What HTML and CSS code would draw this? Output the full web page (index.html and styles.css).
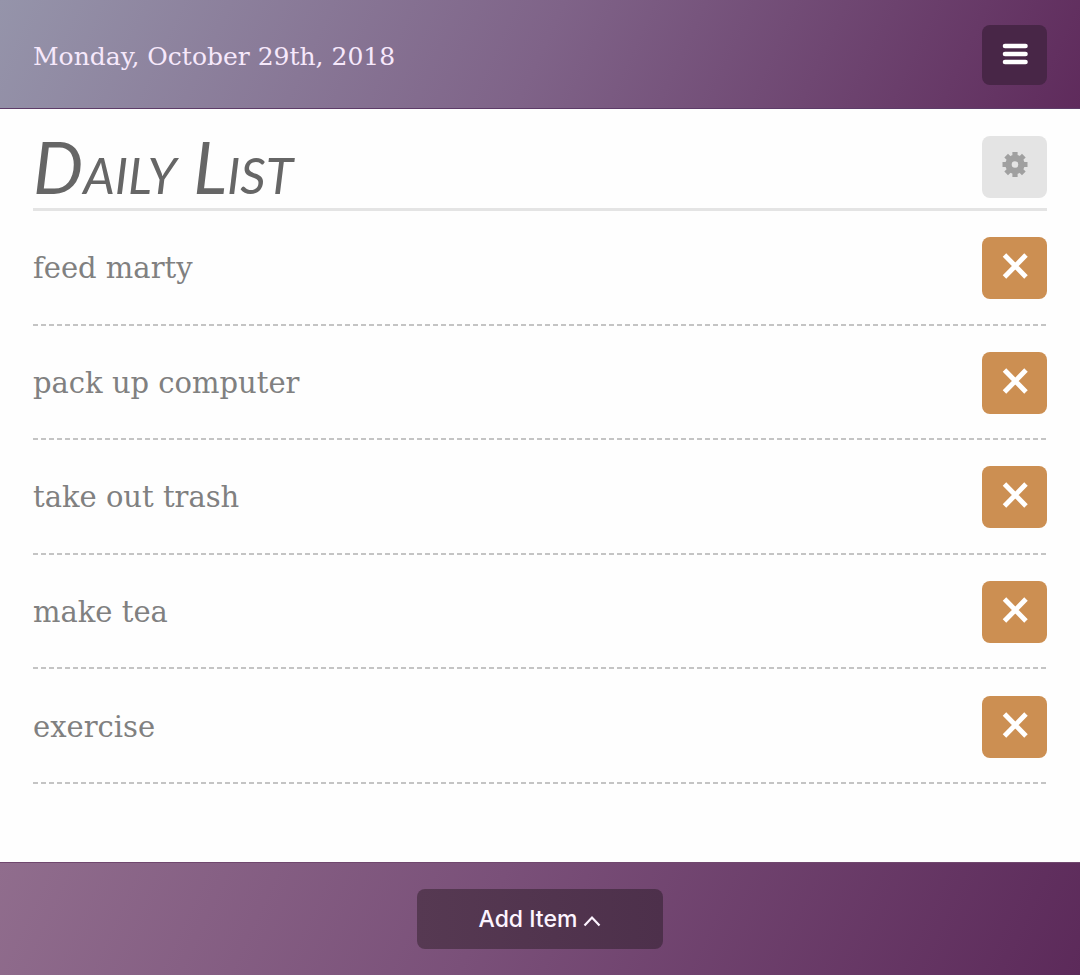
FILE: index.html
```html
<!DOCTYPE html>
<html lang="en">
<head>
<meta charset="utf-8">
<meta name="viewport" content="width=device-width, initial-scale=1">
<title>Daily List</title>
<link rel="stylesheet" href="styles.css">
</head>
<body>
<header class="topbar">
  <time class="date" datetime="2018-10-29">Monday, October 29th, 2018</time>
  <button class="btn btn-dark" type="button" aria-label="Menu">
    <svg class="icon" viewBox="0 0 26 26" aria-hidden="true"><path d="M3 5h20.500M3 13h20.500M3 21h20.500" stroke="currentColor" stroke-width="4.600" stroke-linecap="round"/></svg>
  </button>
</header>
<main class="content">
  <div class="heading">
    <h1 class="title">Daily List</h1>
    <button class="btn btn-light" type="button" aria-label="List settings">
      <svg class="icon" viewBox="0 0 26 26" aria-hidden="true">
        <g fill="currentColor">
          <path fill-rule="evenodd" d="M13 2.800a9.700 9.700 0 1 0 0 19.400a9.700 9.700 0 1 0 0-19.400zM13 9.200a3.300 3.300 0 1 1 0 6.600a3.300 3.300 0 1 1 0-6.600z"/>
          <path id="tooth" d="M10.400 0h5.200v5h-5.200zM10.400 20h5.200v5h-5.200zM.5 9.900h5v5.200h-5zM20.500 9.900h5v5.200h-5z"/>
          <use href="#tooth" transform="rotate(45 13 12.500)"/>
        </g>
      </svg>
    </button>
  </div>
  <ul class="list">
    <li class="item"><span>feed marty</span><button class="btn btn-remove" type="button" aria-label="Remove feed marty"><svg class="icon" viewBox="0 0 26 26" aria-hidden="true"><path d="M2.500 2l21.500 22M24 2L2.500 24" stroke="currentColor" stroke-width="4.900"/></svg></button></li>
    <li class="item"><span>pack up computer</span><button class="btn btn-remove" type="button" aria-label="Remove pack up computer"><svg class="icon" viewBox="0 0 26 26" aria-hidden="true"><path d="M2.500 2l21.500 22M24 2L2.500 24" stroke="currentColor" stroke-width="4.900"/></svg></button></li>
    <li class="item"><span>take out trash</span><button class="btn btn-remove" type="button" aria-label="Remove take out trash"><svg class="icon" viewBox="0 0 26 26" aria-hidden="true"><path d="M2.500 2l21.500 22M24 2L2.500 24" stroke="currentColor" stroke-width="4.900"/></svg></button></li>
    <li class="item"><span>make tea</span><button class="btn btn-remove" type="button" aria-label="Remove make tea"><svg class="icon" viewBox="0 0 26 26" aria-hidden="true"><path d="M2.500 2l21.500 22M24 2L2.500 24" stroke="currentColor" stroke-width="4.900"/></svg></button></li>
    <li class="item"><span>exercise</span><button class="btn btn-remove" type="button" aria-label="Remove exercise"><svg class="icon" viewBox="0 0 26 26" aria-hidden="true"><path d="M2.500 2l21.500 22M24 2L2.500 24" stroke="currentColor" stroke-width="4.900"/></svg></button></li>
  </ul>
</main>
<footer class="bottombar">
  <button class="add" type="button">Add Item
    <svg class="chevron" viewBox="0 0 18 12" aria-hidden="true"><path d="M1.500 10.500L9 2.500l7.500 8" fill="none" stroke="currentColor" stroke-width="2.200"/></svg>
  </button>
</footer>
</body>
</html>
```

FILE: styles.css
```css
* {
  box-sizing: border-box;
}

body {
  margin: 0;
  min-height: 100vh;
  display: flex;
  flex-direction: column;
  background: #fefefe;
  font-family: "DejaVu Serif", serif;
}

.topbar,
.bottombar {
  display: flex;
  align-items: center;
}

.topbar {
  justify-content: space-between;
  padding: 25px 33px 23px;
  background: linear-gradient(115deg, #9594aa, #7f6388 50%, #5f2b5c);
  border-bottom: 1px solid #5d3b68;
}

.date {
  padding-top: 4px;
  color: #f6e8fb;
  font-size: 25px;
  line-height: 32px;
}

.btn {
  display: flex;
  flex: none;
  justify-content: center;
  width: 65px;
  height: 62px;
  padding: 16px 0 0 1px;
  border: 0;
  border-radius: 8px;
  cursor: pointer;
}

.btn-dark {
  height: 60px;
  color: #fff;
  background: #482647;
}

.btn-light {
  color: #a0a0a0;
  background: #e4e4e4;
}

.btn-remove {
  color: #fff;
  background: #cc8f52;
}

.icon {
  width: 26px;
  height: 26px;
}

.content {
  flex: 1;
  display: flex;
  flex-direction: column;
  padding: 27px 33px 78px;
}

.heading {
  display: flex;
  align-items: center;
  justify-content: space-between;
  padding-bottom: 10px;
  border-bottom: 3px solid #e4e4e4;
}

.title {
  margin: 0;
  color: #666;
  font-family: Lato, sans-serif;
  font-size: 71px;
  font-style: italic;
  font-variant: small-caps;
  font-weight: 400;
  line-height: 62px;
}

.list {
  flex: 1;
  display: grid;
  grid-auto-rows: 1fr;
  margin: 0;
  padding: 0;
  list-style: none;
}

.item {
  display: flex;
  align-items: center;
  justify-content: space-between;
  color: #808080;
  font-size: 29px;
  line-height: 36px;
  background: repeating-linear-gradient(90deg, #c4c4c4 0 5px, transparent 5px 8px) bottom / 100% 2px no-repeat;
}

.bottombar {
  justify-content: center;
  padding: 26px 33px;
  background: linear-gradient(115deg, #906d8d, #7a5079 45%, #5c2a5a);
  border-top: 1px solid #70476e;
}

.add {
  width: 246px;
  height: 60px;
  padding: 0;
  border: 0;
  border-radius: 8px;
  color: #fdf4ff;
  background: linear-gradient(90deg, #563952, #4d304b);
  font-family: Inter, sans-serif;
  font-size: 23px;
  font-weight: 500;
  cursor: pointer;
}

.chevron {
  width: 18px;
  height: 12px;
}
```
